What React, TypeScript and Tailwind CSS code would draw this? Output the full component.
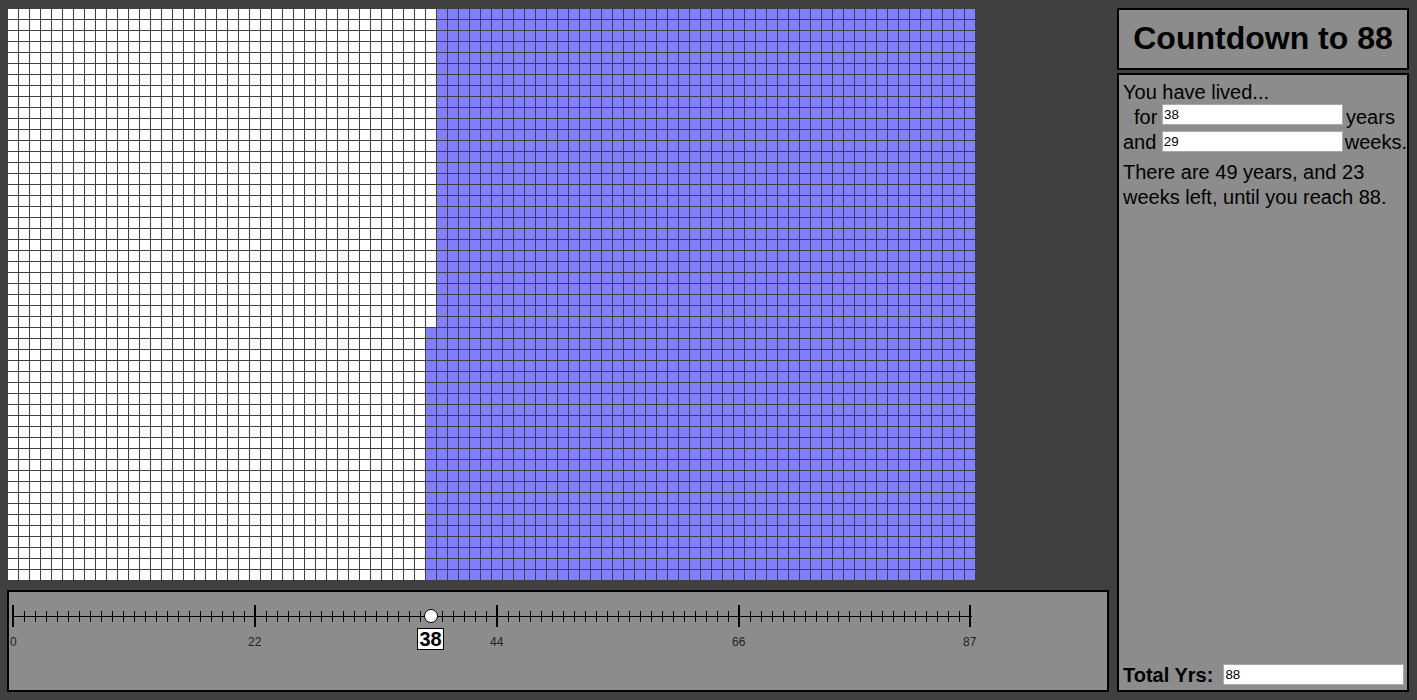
import type { ReactNode } from "react";

const AGE = 38;
const WEEKS = 29;
const COLS = 88;
const ROWS = 52;

// one box per week, one column per year
function WeekGrid() {
  const cells = [];
  for (let row = 0; row < ROWS; row++) {
    for (let col = 0; col < COLS; col++) {
      const lived = col < AGE || (col === AGE && row < WEEKS);
      cells.push(
        <div key={`${row}-${col}`} className={lived ? "bg-white" : "bg-[#8080ff]"} />,
      );
    }
  }
  return (
    <div className="grid h-[571px] w-[967px] grid-cols-[repeat(88,10px)] grid-rows-[repeat(52,10px)] gap-px">
      {cells}
    </div>
  );
}

function Timeline() {
  const ticks = Array.from({ length: COLS }, (_, i) => i);
  return (
    <div className="relative h-[102px] w-[1102px] border-2 border-black bg-[#8c8c8c]">
      <svg className="absolute left-0 top-0" width="1098" height="98">
        <line x1="4" x2="963" y1="24.5" y2="24.5" stroke="#000" />
        {ticks.map((i) =>
          i % 22 === 0 || i === 87 ? (
            <line key={i} x1={4 + i * 11} x2={4 + i * 11} y1="13" y2="35" stroke="#000" strokeWidth="2" />
          ) : (
            <line key={i} x1={4.5 + i * 11} x2={4.5 + i * 11} y1="19" y2="30" stroke="#000" />
          ),
        )}
      </svg>
      <div className="absolute left-[415px] top-[17px] h-[14px] w-[14px] rounded-full border border-black bg-white" />
      <div className="absolute left-[408px] top-[36px] flex h-[22px] w-[27px] items-center justify-center border border-black bg-white text-[20px] font-bold text-black">
        38
      </div>
      <span className="absolute left-[1px] top-[43px] text-[12px] leading-[14px] text-[#222]">0</span>
      <span className="absolute left-[239px] top-[43px] text-[12px] leading-[14px] text-[#222]">22</span>
      <span className="absolute left-[481px] top-[43px] text-[12px] leading-[14px] text-[#222]">44</span>
      <span className="absolute left-[723px] top-[43px] text-[12px] leading-[14px] text-[#222]">66</span>
      <span className="absolute left-[954px] top-[43px] text-[12px] leading-[14px] text-[#222]">87</span>
    </div>
  );
}

function Field({ value, className }: { value: string; className: string }) {
  return (
    <input
      readOnly
      value={value}
      className={`h-[21px] w-[181px] border border-[#a9a9a9] bg-white px-px text-[13.33px] text-black outline-none ${className}`}
    />
  );
}

function Row({ children }: { children: ReactNode }) {
  return <div className="flex h-[25px] items-start whitespace-nowrap">{children}</div>;
}

export default function App() {
  return (
    <div className="flex h-[700px] w-[1417px] overflow-hidden bg-[#404040] pl-[7px] font-['Liberation_Sans',Arial,sans-serif] text-black">
      <div className="flex w-[1110px] shrink-0 flex-col">
        <div className="pl-px pt-[9px]">
          <WeekGrid />
        </div>
        <div className="mt-[10px]">
          <Timeline />
        </div>
      </div>
      <div className="flex w-[292px] shrink-0 flex-col gap-[3px] pt-2">
        <div className="flex h-[62px] items-center justify-center border-2 border-black bg-[#8c8c8c] pb-[2px] text-[32px] font-bold">
          Countdown to 88
        </div>
        <div className="flex h-[619px] flex-col border-2 border-black bg-[#8c8c8c] pl-1 text-[20px] leading-[25px]">
          <div className="pt-[5px]">You have lived...</div>
          <Row>
            <span className="w-[39px] pl-[11px]">for</span>
            <Field value="38" className="-mt-px" />
            <span className="ml-[3px]">years</span>
          </Row>
          <Row>
            <span className="w-[39px]">and</span>
            <Field value="29" className="mt-px" />
            <span className="ml-[2px]">weeks.</span>
          </Row>
          <p className="mt-[5px]">
            There are 49 years, and 23
            <br />
            weeks left, until you reach 88.
          </p>
          <div className="mt-auto flex items-start pb-[2px]">
            <span className="font-bold">Total Yrs:</span>
            <Field value="88" className="ml-[10px] mt-px" />
          </div>
        </div>
      </div>
    </div>
  );
}
